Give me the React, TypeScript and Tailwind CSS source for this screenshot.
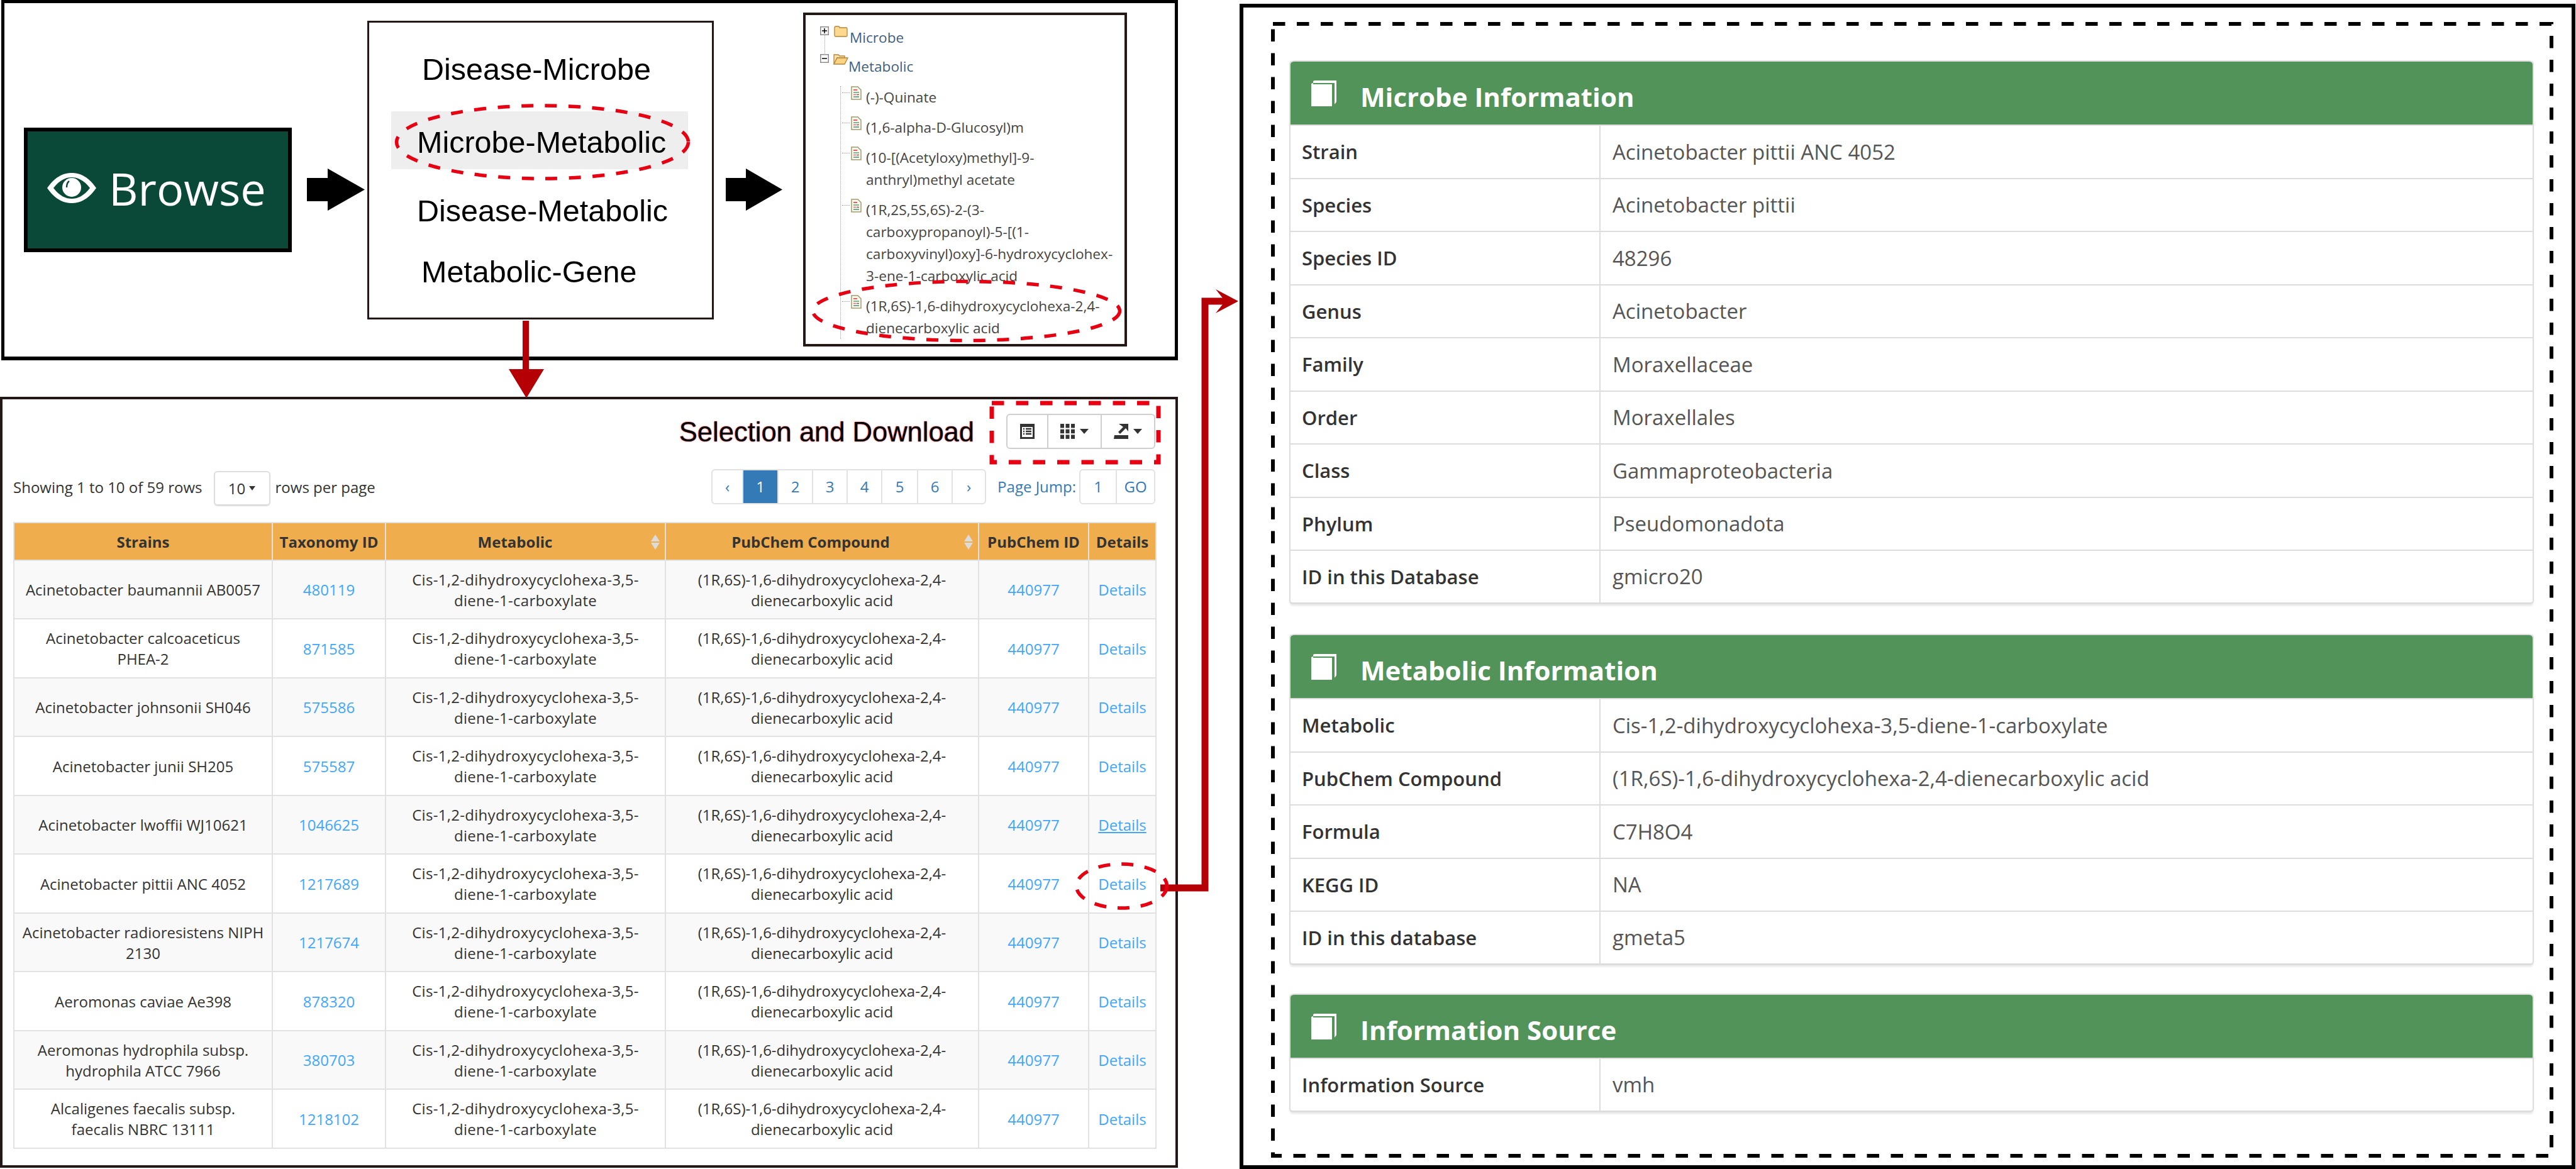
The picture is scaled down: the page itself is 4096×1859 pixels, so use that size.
const metabolicName = "Cis-1,2-dihydroxycyclohexa-3,5-\ndiene-1-carboxylate";
const compoundName = "(1R,6S)-1,6-dihydroxycyclohexa-2,4-\ndienecarboxylic acid";

const rows = [
  { strain: "Acinetobacter baumannii AB0057", taxonomy: "480119" },
  { strain: "Acinetobacter calcoaceticus\nPHEA-2", taxonomy: "871585" },
  { strain: "Acinetobacter johnsonii SH046", taxonomy: "575586" },
  { strain: "Acinetobacter junii SH205", taxonomy: "575587" },
  { strain: "Acinetobacter lwoffii WJ10621", taxonomy: "1046625" },
  { strain: "Acinetobacter pittii ANC 4052", taxonomy: "1217689" },
  { strain: "Acinetobacter radioresistens NIPH\n2130", taxonomy: "1217674" },
  { strain: "Aeromonas caviae Ae398", taxonomy: "878320" },
  { strain: "Aeromonas hydrophila subsp.\nhydrophila ATCC 7966", taxonomy: "380703" },
  { strain: "Alcaligenes faecalis subsp.\nfaecalis NBRC 13111", taxonomy: "1218102" },
];

const treeItems = [
  ["(-)-Quinate"],
  ["(1,6-alpha-D-Glucosyl)m"],
  ["(10-[(Acetyloxy)methyl]-9-", "anthryl)methyl acetate"],
  ["(1R,2S,5S,6S)-2-(3-", "carboxypropanoyl)-5-[(1-", "carboxyvinyl)oxy]-6-hydroxycyclohex-", "3-ene-1-carboxylic acid"],
  ["(1R,6S)-1,6-dihydroxycyclohexa-2,4-", "dienecarboxylic acid"],
];

const panels = [
  {
    title: "Microbe Information",
    rows: [
      ["Strain", "Acinetobacter pittii ANC 4052"],
      ["Species", "Acinetobacter pittii"],
      ["Species ID", "48296"],
      ["Genus", "Acinetobacter"],
      ["Family", "Moraxellaceae"],
      ["Order", "Moraxellales"],
      ["Class", "Gammaproteobacteria"],
      ["Phylum", "Pseudomonadota"],
      ["ID in this Database", "gmicro20"],
    ],
  },
  {
    title: "Metabolic Information",
    rows: [
      ["Metabolic", "Cis-1,2-dihydroxycyclohexa-3,5-diene-1-carboxylate"],
      ["PubChem Compound", "(1R,6S)-1,6-dihydroxycyclohexa-2,4-dienecarboxylic acid"],
      ["Formula", "C7H8O4"],
      ["KEGG ID", "NA"],
      ["ID in this database", "gmeta5"],
    ],
  },
  {
    title: "Information Source",
    rows: [["Information Source", "vmh"]],
  },
];

const pages = ["‹", "1", "2", "3", "4", "5", "6", "›"];
const pageWidths = ["w-[49px]", "w-[56px]", "w-[55px]", "w-[55px]", "w-[55px]", "w-[57px]", "w-[55px]", "w-[51px]"];

function BookIcon() {
  return (
    <svg viewBox="0 0 40 41" className="h-[41px] w-[40px] shrink-0">
      <path d="M3 1 L5 0 H40 V34 L37 38 V4 H3 Z" fill="#fff" />
      <path d="M0 5 L3 4 L3 6 H33 V41 H0 Z" fill="#fff" />
    </svg>
  );
}

function SortArrows() {
  return (
    <svg viewBox="0 0 14 24" className="absolute right-[8px] top-[18px] h-[24px] w-[14px]">
      <path d="M7 0 L14 11 H0 Z" fill="#dcdcdc" />
      <path d="M0 13 H14 L7 24 Z" fill="#dcdcdc" />
    </svg>
  );
}

function Caret() {
  return (
    <svg viewBox="0 0 14 8" className="h-[8px] w-[14px]">
      <path d="M0 0 H14 L7 8 Z" fill="#333" />
    </svg>
  );
}

function DocIcon() {
  return (
    <svg viewBox="0 0 17 22" className="h-[22px] w-[17px]">
      <path d="M1 1 H11 L16 6 V21 H1 Z" fill="#fbfaf2" stroke="#a59a6a" strokeWidth="1.5" />
      <path d="M4 6 H10" stroke="#f25c5c" strokeWidth="2" />
      <path d="M4 10 H13" stroke="#5d9b6f" strokeWidth="1.5" />
      <path d="M4 13.5 H8" stroke="#f25c5c" strokeWidth="1.5" />
      <path d="M9 13.5 H13" stroke="#666" strokeWidth="1.5" />
      <path d="M4 17 H13" stroke="#3f8f78" strokeWidth="1.5" />
    </svg>
  );
}

function ExpandBox({ open }: { open: boolean }) {
  return (
    <svg viewBox="0 0 14 14" className="h-[14px] w-[14px]">
      <rect x="0.75" y="0.75" width="12.5" height="12.5" fill="#fff" stroke="#8c8c8c" strokeWidth="1.5" />
      <path d={open ? "M3 7 H11" : "M3 7 H11 M7 3 V11"} stroke="#000" strokeWidth="1.5" />
    </svg>
  );
}

function FolderIcon({ open }: { open: boolean }) {
  return open ? (
    <svg viewBox="0 0 24 18" className="h-[18px] w-[24px]">
      <path d="M1 17 V2 H8 L10 4 H18 V7 H6 L1 17 Z" fill="#fde3a7" stroke="#b5853a" strokeWidth="1.3" />
      <path d="M1 17 L6 7 H23 L18 17 Z" fill="#fbd184" stroke="#b5853a" strokeWidth="1.3" />
    </svg>
  ) : (
    <svg viewBox="0 0 22 18" className="h-[18px] w-[22px]">
      <path d="M1 3 Q1 1 3 1 H7 Q9 1 9 3 H20 Q21 3 21 5 V16 Q21 17 19 17 H3 Q1 17 1 15 Z" fill="#fdd990" stroke="#b5853a" strokeWidth="1.3" />
    </svg>
  );
}

function FileTree() {
  return (
    <div className="ml-[142px] mt-[15px] h-[531px] w-[515px] shrink-0 border-[4px] border-[#231815] bg-white text-[22.6px] leading-[35px]">
      <div className="relative ml-[23px] mt-[18px] flex h-[35px] items-start text-[#3f5f7f]">
        <span className="mt-[0px]"><ExpandBox open={false} /></span>
        <span className="ml-[8px] mt-[-1px]"><FolderIcon open={false} /></span>
        <span className="ml-[3px]">Microbe</span>
        <span className="absolute left-[7px] top-[13px] h-[32px] border-l border-dotted border-[#999]" />
      </div>
      <div className="ml-[23px] mt-[11px] flex h-[35px] items-start text-[#3f5f7f]">
        <span className="mt-[-2px]"><ExpandBox open /></span>
        <span className="ml-[7px] mt-[-3px]"><FolderIcon open /></span>
        <span>Metabolic</span>
      </div>
      <div className="ml-[55px] mt-[14px] flex flex-col gap-[13px] border-l border-dotted border-[#999] pl-[16px] text-[#444]">
        {treeItems.map((lines) => (
          <div key={lines[0]} className="relative flex items-start">
            <span className="absolute left-[-14px] top-[10px] w-[12px] border-t border-dotted border-[#999]" />
            <DocIcon />
            <div className="ml-[7px] whitespace-nowrap">
              {lines.map((line) => (
                <div key={line}>{line}</div>
              ))}
            </div>
          </div>
        ))}
      </div>
    </div>
  );
}

function BrowseCard() {
  return (
    <div className="ml-[31px] mt-[198px] flex h-[198px] w-[426px] shrink-0 items-center border-[6px] border-black bg-[#0a4838] pb-[6px] pl-[29px] text-white">
      <svg viewBox="0 0 82 52" className="h-[52px] w-[82px]">
        <path d="M2 26 C16 6 30 2 41 2 C52 2 66 6 80 26 C66 46 52 50 41 50 C30 50 16 46 2 26 Z" fill="#fff" />
        <path d="M12 26 C22 13 32 9 41 9 C50 9 60 13 70 26 C60 39 50 43 41 43 C32 43 22 39 12 26 Z" fill="#0a4838" />
        <circle cx="41" cy="25" r="15" fill="#fff" />
        <path d="M37 15 C34 17 33 21 33 25" stroke="#0a4838" strokeWidth="2.5" fill="none" />
      </svg>
      <span className="ml-[18px] text-[72px] font-medium leading-none">Browse</span>
    </div>
  );
}

function CategoryMenu() {
  return (
    <div className="ml-[120px] mt-[28px] h-[475px] w-[551px] shrink-0 border-[3px] border-[#231815] bg-white font-['Liberation_Sans',Arial,sans-serif] text-[48.5px] leading-[60px] text-black">
      <div className="ml-[84px] mt-[44px]">Disease-Microbe</div>
      <div className="ml-[35px] mt-[37px] flex h-[92px] w-[472px] items-center bg-[#eeeeee] pl-[41px] pt-[6px]">Microbe-Metabolic</div>
      <div className="ml-[76px] mt-[36px]">Disease-Metabolic</div>
      <div className="ml-[83px] mt-[37px]">Metabolic-Gene</div>
    </div>
  );
}

function Toolbar() {
  return (
    <div className="flex h-[56px] w-[237px] rounded-[6px] border-2 border-[#cfcfcf]">
      <div className="flex w-[65px] items-center justify-center border-r-2 border-[#cfcfcf]">
        <svg viewBox="0 0 23 24" className="h-[24px] w-[23px]">
          <path d="M0 0 H23 V24 H0 Z M3 5 V21 H20 V5 Z" fill="#333" fillRule="evenodd" />
          <path d="M5 8 H7 M9 8 H18 M5 12 H7 M9 12 H18 M5 16 H7 M9 16 H18" stroke="#333" strokeWidth="2.4" />
        </svg>
      </div>
      <div className="flex w-[85px] items-center justify-center gap-[8px] border-r-2 border-[#cfcfcf]">
        <svg viewBox="0 0 23 24" className="h-[24px] w-[23px]" fill="#333">
          <rect x="0" y="0" width="6" height="6.5" />
          <rect x="8.5" y="0" width="6" height="6.5" />
          <rect x="17" y="0" width="6" height="6.5" />
          <rect x="0" y="8.7" width="6" height="6.5" />
          <rect x="8.5" y="8.7" width="6" height="6.5" />
          <rect x="17" y="8.7" width="6" height="6.5" />
          <rect x="0" y="17.4" width="6" height="6.5" />
          <rect x="8.5" y="17.4" width="6" height="6.5" />
          <rect x="17" y="17.4" width="6" height="6.5" />
        </svg>
        <Caret />
      </div>
      <div className="flex flex-1 items-center justify-center gap-[8px]">
        <svg viewBox="0 0 23 24" className="h-[24px] w-[23px]" fill="#333">
          <path d="M8 0 H23 V12 L19 7 L10 16 L7 13 L15 5 Z" />
          <path d="M1 18 H23 V24 H0 Z" />
        </svg>
        <Caret />
      </div>
    </div>
  );
}

function Pagination() {
  return (
    <div className="flex items-start text-[24px] text-[#337ab7]">
      <div className="flex h-[56px] overflow-hidden rounded-[6px] border-2 border-[#e2e2e2]">
        {pages.map((page, i) => (
          <div
            key={page}
            className={`flex items-center justify-center border-r-2 border-[#e2e2e2] last:border-r-0 ${pageWidths[i]} ${page === "1" ? "border-[#337ab7] bg-[#337ab7] text-white" : ""}`}
          >
            {page}
          </div>
        ))}
      </div>
      <span className="ml-[18px] mr-[5px] leading-[56px]">Page Jump:</span>
      <div className="flex h-[56px] rounded-[6px] border-2 border-[#e2e2e2]">
        <div className="flex w-[58px] items-center justify-center border-r-2 border-[#e2e2e2]">1</div>
        <div className="flex w-[59px] items-center justify-center">GO</div>
      </div>
    </div>
  );
}

function ResultsTable() {
  const thClass = "relative border-2 border-[#e2e2e2] bg-[#f0ad4e] px-0 font-bold";
  const tdClass = "border-2 border-[#e2e2e2] p-0 text-center whitespace-pre-line";
  return (
    <table className="mt-[26px] w-[1816px] table-fixed border-collapse text-center text-[24px] leading-[33px] text-[#333]">
      <colgroup>
        <col className="w-[411px]" />
        <col className="w-[180px]" />
        <col className="w-[445px]" />
        <col className="w-[498px]" />
        <col className="w-[175px]" />
        <col className="w-[107px]" />
      </colgroup>
      <thead>
        <tr className="h-[60px]">
          <th className={thClass}>Strains</th>
          <th className={thClass}>Taxonomy ID</th>
          <th className={thClass}>
            <span className="pr-[33px]">Metabolic</span>
            <SortArrows />
          </th>
          <th className={thClass}>
            <span className="pr-[36px]">PubChem Compound</span>
            <SortArrows />
          </th>
          <th className={thClass}>PubChem ID</th>
          <th className={thClass}>Details</th>
        </tr>
      </thead>
      <tbody>
        {rows.map((row, i) => (
          <tr key={row.strain} className={i % 2 === 0 ? "h-[93px] bg-[#f9f9f9]" : "h-[94px] bg-white"}>
            <td className={tdClass}>{row.strain}</td>
            <td className={`${tdClass} text-[#3fa7ff]`}>{row.taxonomy}</td>
            <td className={`${tdClass} tracking-[0.3px]`}>{metabolicName}</td>
            <td className={tdClass}>{compoundName}</td>
            <td className={`${tdClass} text-[#3fa7ff]`}>440977</td>
            <td className={`${tdClass} text-[#3fa7ff] ${i === 4 ? "underline" : ""}`}>Details</td>
          </tr>
        ))}
      </tbody>
    </table>
  );
}

function InfoPanel({ title, items, className }: { title: string; items: string[][]; className: string }) {
  return (
    <div className={`w-[1979px] rounded-[6px] border-x-2 border-b-[3px] border-[#dddddd] shadow-[0_3px_2px_#eeeeee] ${className}`}>
      <div className="flex h-[104px] items-center rounded-t-[6px] border-y-2 border-[#dddddd] bg-[#529359] pl-[33px] text-white">
        <BookIcon />
        <span className="ml-[38px] pt-[10px] text-[42px] font-bold">{title}</span>
      </div>
      {items.map(([label, value], i) => (
        <div
          key={label}
          className={`flex items-stretch ${i === items.length - 1 ? "h-[82px]" : i % 2 === 0 ? "h-[85px] border-b-2 border-[#dddddd]" : "h-[84px] border-b-2 border-[#dddddd]"}`}
        >
          <div className="flex w-[493px] items-center border-r-2 border-[#dddddd] pl-[18px] text-[31px] font-semibold text-[#333]">{label}</div>
          <div className="flex items-center pl-[19px] text-[33px] text-[#555]">{value}</div>
        </div>
      ))}
    </div>
  );
}

function Annotations() {
  return (
    <svg viewBox="0 0 4096 1859" className="pointer-events-none absolute inset-0 h-[1859px] w-[4096px]">
      <path d="M488 283 H521 V268 L580 301.5 L521 335 V320 H488 Z" fill="#000" />
      <path d="M1154 283 H1186 V268 L1244 301.5 L1186 335 V320 H1154 Z" fill="#000" />
      <path d="M831 510 H841 V587 H865 L837 633 L809 587 H831 Z" fill="#b50005" />
      <ellipse cx="862.5" cy="226" rx="232" ry="58" fill="none" stroke="#e60012" strokeWidth="5.5" strokeDasharray="19 18.5" />
      <ellipse cx="1536.5" cy="494.5" rx="244" ry="47" fill="none" stroke="#e60012" strokeWidth="5.5" strokeDasharray="19 18.5" />
      <rect x="1577" y="641" width="265" height="94" fill="none" stroke="#e60012" strokeWidth="7" strokeDasharray="19.5 19" />
      <path d="M1845 1412 H1916 V479 H1948" fill="none" stroke="#b50005" strokeWidth="11" />
      <path d="M1933 460 L1969 479 L1933 498 L1948 479 Z" fill="#b50005" />
      <ellipse cx="1783.5" cy="1409" rx="72" ry="35" fill="none" stroke="#e60012" strokeWidth="5.5" strokeDasharray="19 18" />
      <rect x="2024" y="38" width="2033" height="1800" fill="none" stroke="#000" strokeWidth="6" strokeDasharray="19.5 18.5" />
    </svg>
  );
}

export default function App() {
  return (
    <div className="relative flex h-[1859px] w-[4096px] overflow-hidden bg-white font-['Open_Sans','Liberation_Sans',sans-serif]">
      <div className="w-[1873px] shrink-0">
        <section className="ml-[2px] flex h-[573px] border-x-[5px] border-b-[6px] border-t-[5px] border-black">
          <BrowseCard />
          <CategoryMenu />
          <FileTree />
        </section>

        <section className="mt-[58px] h-[1226px] border-[4px] border-[#231815] pl-[17px] pt-[23px]">
          <div className="flex h-[56px] items-center justify-end pr-[32px]">
            <span className="mr-[51px] mt-[4px] font-['Liberation_Sans',Arial,sans-serif] text-[43.5px] text-black [text-shadow:0_0_2px_#e60012]">Selection and Download</span>
            <Toolbar />
          </div>
          <div className="mt-[32px] flex h-[58px] items-start justify-between pr-[32px] text-[24px] text-[#333]">
            <div className="flex items-start">
              <span className="leading-[58px]">Showing 1 to 10 of 59 rows</span>
              <div className="ml-[18px] mt-[3px] flex h-[55px] w-[90px] items-center justify-center gap-[6px] rounded-[6px] border-2 border-[#dddddd] shadow-[0_1px_1px_#ddd]">
                10
                <svg viewBox="0 0 10 7" className="h-[7px] w-[10px]"><path d="M0 0 H10 L5 7 Z" fill="#333" /></svg>
              </div>
              <span className="ml-[8px] leading-[58px]">rows per page</span>
            </div>
            <Pagination />
          </div>
          <ResultsTable />
        </section>
      </div>

      <section className="ml-[98px] h-[1853px] w-[2124px] shrink-0 self-end border-[6px] border-black pl-[73px] pt-[84px]">
        <InfoPanel title={panels[0].title} items={panels[0].rows} className="" />
        <InfoPanel title={panels[1].title} items={panels[1].rows} className="mt-[47px]" />
        <InfoPanel title={panels[2].title} items={panels[2].rows} className="mt-[45px]" />
      </section>

      <Annotations />
    </div>
  );
}
